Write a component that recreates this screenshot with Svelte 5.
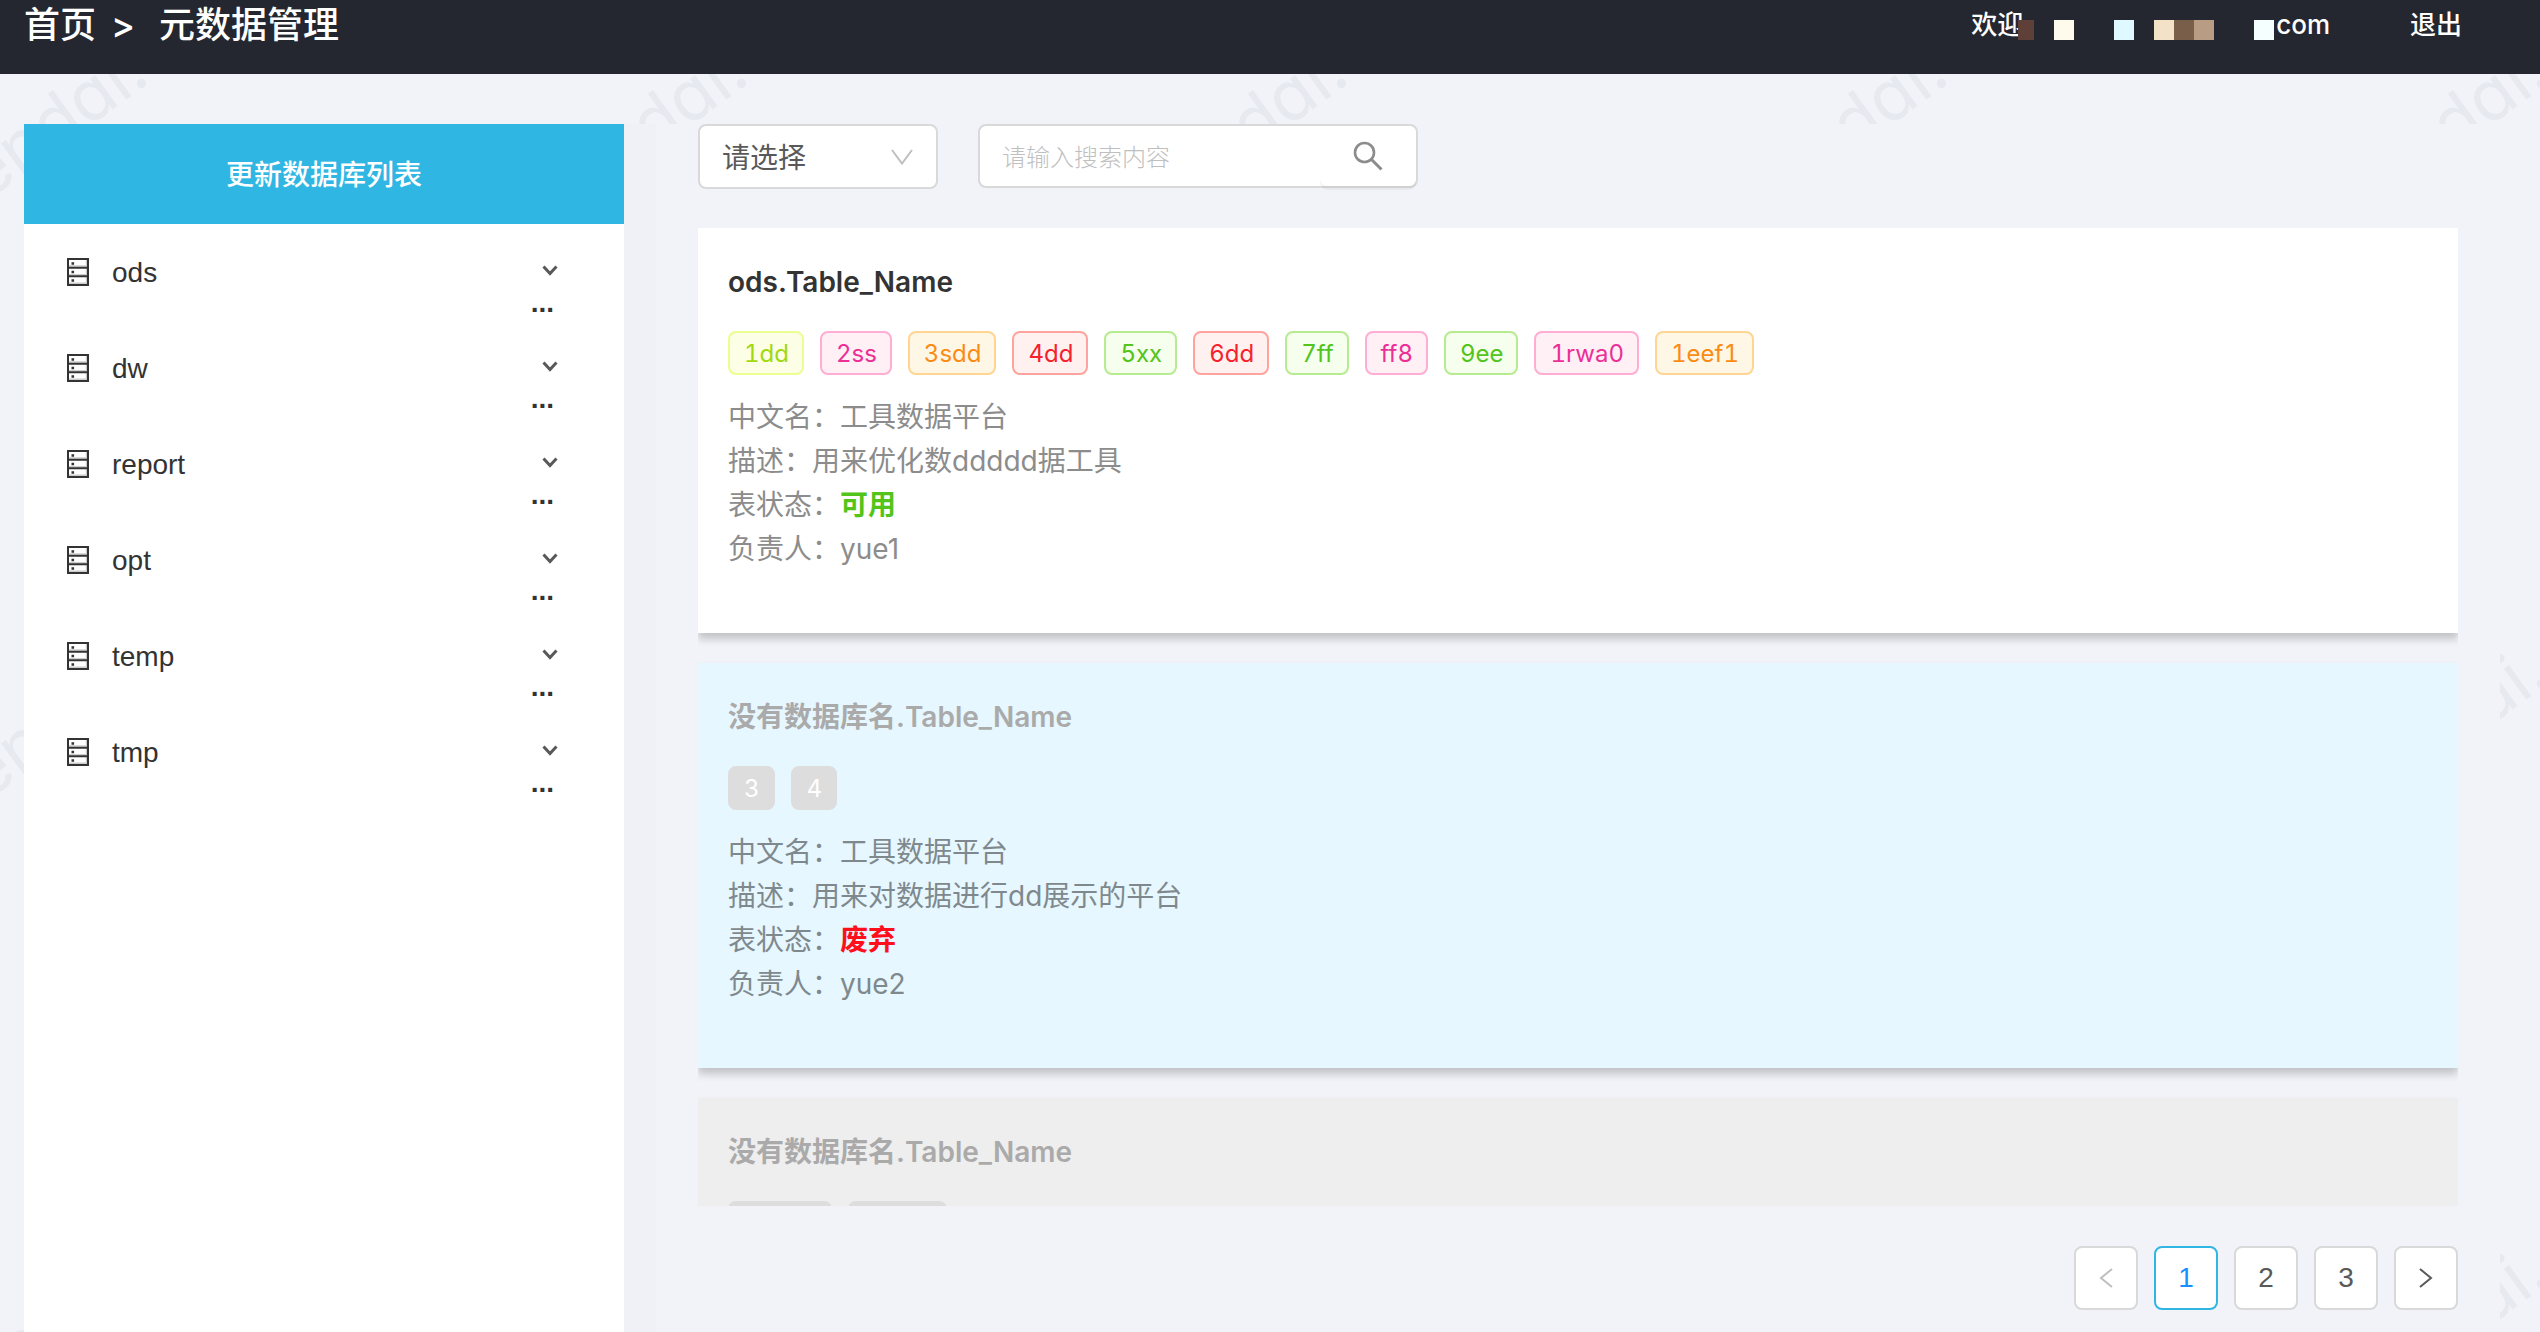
<script>
  const databases = ['ods', 'dw', 'report', 'opt', 'temp', 'tmp'];

  const cards = [
    {
      tone: 'plain',
      title: 'ods.Table_Name',
      tags: [
        ['1dd', 'lime'],
        ['2ss', 'magenta'],
        ['3sdd', 'orange'],
        ['4dd', 'red'],
        ['5xx', 'green'],
        ['6dd', 'red'],
        ['7ff', 'green'],
        ['ff8', 'magenta'],
        ['9ee', 'green'],
        ['1rwa0', 'magenta'],
        ['1eef1', 'orange']
      ],
      name: '工具数据平台',
      desc: '用来优化数ddddd据工具',
      state: '可用',
      owner: 'yue1'
    },
    {
      tone: 'blue',
      title: '没有数据库名.Table_Name',
      tags: [
        ['3', 'muted'],
        ['4', 'muted']
      ],
      name: '工具数据平台',
      desc: '用来对数据进行dd展示的平台',
      state: '废弃',
      owner: 'yue2'
    },
    {
      tone: 'gray',
      title: '没有数据库名.Table_Name',
      tags: [
        ['1rwa0', 'muted'],
        ['1eef1', 'muted']
      ],
      name: '工具数据平台',
      desc: '用来对数据进行展示的平台',
      state: '废弃',
      owner: 'yue3'
    }
  ];

  const marks = [0, 1, 2].flatMap((row) =>
    [0, 1, 2, 3, 4].map((col) => ({ x: col * 600 + 152, y: row * 600 + 81 }))
  );

  let page = $state(1);
  let query = $state('');
</script>

<div class="page">
  <svg class="watermark" aria-hidden="true">
    {#each marks as m}
      <text transform="translate({m.x} {m.y}) rotate(-36)" text-anchor="end">wendai.</text>
    {/each}
  </svg>

  <header>
    <nav class="crumbs">
      <a href="#home">首页</a>
      <span class="sep">&gt;</span>
      <span>元数据管理</span>
    </nav>
    <div class="user">
      <span>欢迎</span>
      <svg class="mosaic" viewBox="0 0 256 20" aria-hidden="true">
        <rect width="16" height="20" fill="#5e4039" />
        <rect x="36" width="20" height="20" fill="#fffbec" />
        <rect x="96" width="20" height="20" fill="#e0f8ff" />
        <rect x="136" width="20" height="20" fill="#f3e2c8" />
        <rect x="156" width="20" height="20" fill="#795e4a" />
        <rect x="176" width="20" height="20" fill="#b99c84" />
        <rect x="236" width="20" height="20" fill="#f6ffff" />
      </svg>
      <span>com</span>
      <a class="logout" href="#logout">退出</a>
    </div>
  </header>

  <div class="body">
    <aside>
      <button class="refresh">更新数据库列表</button>
      <ul>
        {#each databases as db}
          <li>
            <svg class="db" viewBox="0 0 22 28" aria-hidden="true">
              <path d="M2 8H20M2 16.700H20M2 25.300H20M19.500 2V26" fill="none" stroke="#ccc" stroke-width="1.400" />
              <path d="M1 1H21V27H1ZM1 9.700H21M1 18.300H21" fill="none" stroke="#333" stroke-width="2" />
              <path d="M4.500 4.200h2.600v2.600h-2.600zM4.500 12.700h2.600v2.600h-2.600zM4.500 21.200h2.600v2.600h-2.600z" fill="#333" />
            </svg>
            <span class="db-name">{db}</span>
            <span class="actions">
              <button aria-label="展开 {db}">
                <svg class="caret" viewBox="0 0 16 12">
                  <path d="M1.500 1.500L8 8.500L14.500 1.500" fill="none" stroke="#595959" stroke-width="3" />
                </svg>
              </button>
              <button class="more" aria-label="更多 {db}">...</button>
            </span>
          </li>
        {/each}
      </ul>
    </aside>

    <main>
      <div class="toolbar">
        <div class="select">
          <select aria-label="类型">
            <option>请选择</option>
            <option>表名</option>
          </select>
          <svg viewBox="0 0 22 16" aria-hidden="true">
            <path d="M1 1L11 14.500L21 1" fill="none" stroke="#bfbfbf" stroke-width="2" />
          </svg>
        </div>
        <form class="search" onsubmit={(e) => e.preventDefault()}>
          <input type="text" placeholder="请输入搜索内容" aria-label="搜索" bind:value={query} />
          <button aria-label="搜索">
            <svg viewBox="0 0 30 30">
              <circle cx="11.500" cy="11.500" r="9.500" fill="none" stroke="#8c8c8c" stroke-width="2.600" />
              <path d="M18 18L28.500 28.500" stroke="#8c8c8c" stroke-width="3" />
            </svg>
          </button>
        </form>
      </div>

      <section class="list">
        {#each cards as card}
          <article class={card.tone}>
            <h2>{card.title}</h2>
            <div class="tags">
              {#each card.tags as [label, tone]}
                <span class="tag {tone}">{label}</span>
              {/each}
            </div>
            <p>中文名：{card.name}</p>
            <p>描述：{card.desc}</p>
            <p>表状态：<strong class:ok={card.state === '可用'}>{card.state}</strong></p>
            <p>负责人：{card.owner}</p>
          </article>
        {/each}
      </section>

      <nav class="pager" aria-label="分页">
        <button class="prev" aria-label="上一页" disabled={page === 1} onclick={() => page--}>
          <svg viewBox="0 0 14 20"><path d="M13 1L2 10L13 19" fill="none" stroke="currentColor" stroke-width="2" /></svg>
        </button>
        {#each [1, 2, 3] as n}
          <button class:current={page === n} onclick={() => (page = n)}>{n}</button>
        {/each}
        <button aria-label="下一页" disabled={page === 3} onclick={() => page++}>
          <svg viewBox="0 0 14 20"><path d="M1 1L12 10L1 19" fill="none" stroke="currentColor" stroke-width="2" /></svg>
        </button>
      </nav>
    </main>
  </div>
</div>

<style>
  :global(body) {
    margin: 0;
    background: #f2f3f8;
  }
  .page {
    position: relative;
    display: flex;
    flex-direction: column;
    height: 100vh;
    overflow: hidden;
    font-family: Inter, 'Noto Sans CJK SC', sans-serif;
    font-size: 28px;
    line-height: 44px;
    color: #333;
  }
  .page * {
    box-sizing: border-box;
  }
  button,
  input,
  select {
    font: inherit;
    color: inherit;
    margin: 0;
    padding: 0;
    border: 0;
    background: none;
    outline: 0;
  }
  button {
    cursor: pointer;
  }
  svg {
    display: block;
    flex: none;
  }
  a {
    color: inherit;
    text-decoration: none;
  }
  .watermark {
    position: absolute;
    inset: 0;
    width: 100%;
    height: 100%;
    fill: #e6e9ef;
    font-size: 70px;
    font-feature-settings: 'cv11';
  }
  header {
    position: relative;
    display: flex;
    justify-content: space-between;
    align-items: flex-start;
    flex: none;
    height: 74px;
    padding: 0 78px 0 24px;
    background: #24272f;
    color: #fff;
  }
  .crumbs {
    display: flex;
    font-size: 36px;
    font-weight: 500;
    line-height: 50px;
  }
  .sep {
    margin: 0 24px 0 15px;
  }
  .user {
    display: flex;
    font-size: 26px;
    font-weight: 500;
    line-height: 50px;
  }
  .mosaic {
    width: 256px;
    height: 20px;
    margin: 20px 2px 0 -5px;
  }
  .logout {
    margin-left: 80px;
  }
  .body {
    position: relative;
    display: flex;
    flex: 1;
    min-height: 0;
    margin: 50px 40px 0 24px;
    background: #f2f3f8;
  }
  aside {
    flex: none;
    width: 600px;
    background: #fff;
    box-shadow: 32px 0 0 #f0f1f6;
  }
  .refresh {
    display: block;
    width: 100%;
    height: 100px;
    padding-top: 2px;
    background: #30b6e3;
    color: #fff;
    font-weight: 500;
  }
  ul {
    margin: 0;
    padding: 0;
    list-style: none;
  }
  li {
    display: flex;
    align-items: center;
    height: 96px;
    padding: 0 66px 0 43px;
    font-family: 'Liberation Sans', 'Noto Sans CJK SC', sans-serif;
  }
  .db {
    width: 22px;
    height: 28px;
  }
  .db-name {
    flex: 1;
    margin-left: 23px;
    padding-top: 2px;
  }
  .actions {
    display: flex;
    flex-direction: column;
    align-self: flex-start;
    align-items: flex-end;
    padding-top: 41px;
  }
  .caret {
    width: 16px;
    height: 12px;
  }
  .more {
    height: 28px;
    margin: 12px 4px 0 0;
    font-weight: 700;
    line-height: 28px;
  }
  main {
    display: flex;
    flex-direction: column;
    flex: 1;
    min-width: 0;
    padding: 0 42px 22px 74px;
  }
  .toolbar {
    display: flex;
    gap: 40px;
    height: 64px;
    margin-bottom: 40px;
  }
  .select {
    position: relative;
    width: 240px;
  }
  select {
    width: 100%;
    height: 65px;
    padding: 2px 22px 0;
    border: 2px solid #d9d9d9;
    border-radius: 8px;
    background: #fff;
    color: #595959;
    appearance: none;
  }
  .select svg {
    position: absolute;
    top: 25px;
    right: 25px;
    width: 22px;
    height: 16px;
    pointer-events: none;
  }
  .search {
    display: flex;
    width: 440px;
    border: 2px solid #d9d9d9;
    border-radius: 8px;
    background: #fff;
  }
  .search input {
    flex: 1;
    min-width: 0;
    padding: 4px 0 0 22px;
    font-size: 24px;
    font-weight: 300;
  }
  .search input::placeholder {
    color: #bfbfbf;
    opacity: 1;
  }
  .search button {
    display: flex;
    align-items: center;
    justify-content: center;
    width: 96px;
    border-radius: 8px;
    box-shadow: 0 4px 0 rgba(0, 0, 0, 0.04);
  }
  .search button svg {
    width: 30px;
    height: 30px;
  }
  .list {
    flex: 1;
    min-height: 0;
    overflow: hidden;
  }
  article {
    margin-bottom: 30px;
    padding: 32px 30px 62px;
    background: #fff;
    box-shadow: 0 6px 8px rgba(0, 0, 0, 0.2);
    color: #8c8c8c;
  }
  article.blue {
    background: #e6f7ff;
    color: #7f898d;
  }
  article.gray {
    background: #eee;
  }
  h2 {
    margin: 0;
    font-size: 28px;
    font-weight: 600;
    line-height: 44px;
    color: #aaa;
  }
  .plain h2 {
    color: #333;
  }
  .tags {
    display: flex;
    gap: 16px;
    margin: 27px 0 20px;
  }
  .tag {
    height: 44px;
    padding: 0 13px 0 14px;
    border: 2px solid;
    border-radius: 8px;
    font-size: 24px;
    font-variant-numeric: tabular-nums;
    line-height: 41px;
  }
  .lime {
    color: #a0d911;
    background: #fcffe6;
    border-color: #eaff8f;
  }
  .magenta {
    color: #eb2f96;
    background: #fff0f6;
    border-color: #ffadd2;
  }
  .orange {
    color: #fa8c16;
    background: #fff7e6;
    border-color: #ffd591;
  }
  .red {
    color: #f5222d;
    background: #fff1f0;
    border-color: #ffa39e;
  }
  .green {
    color: #52c41a;
    background: #f6ffed;
    border-color: #b7eb8f;
  }
  .muted {
    color: #fff;
    background: #ddd;
    border-color: #ddd;
  }
  p {
    margin: 0;
  }
  strong {
    font-weight: 700;
    color: #ff0f1c;
  }
  strong.ok {
    color: #52c41a;
  }
  .pager {
    display: flex;
    justify-content: flex-end;
    gap: 16px;
    margin-top: 40px;
  }
  .pager button {
    display: flex;
    align-items: center;
    justify-content: center;
    width: 64px;
    height: 64px;
    border: 2px solid #d9d9d9;
    border-radius: 8px;
    background: #fff;
    color: #595959;
    font-family: 'Liberation Sans', sans-serif;
  }
  .pager svg {
    width: 14px;
    height: 20px;
  }
  .pager button:disabled {
    color: #bfbfbf;
  }
  .pager button.current {
    border-color: #30b6e3;
    color: #1890ff;
  }
</style>
